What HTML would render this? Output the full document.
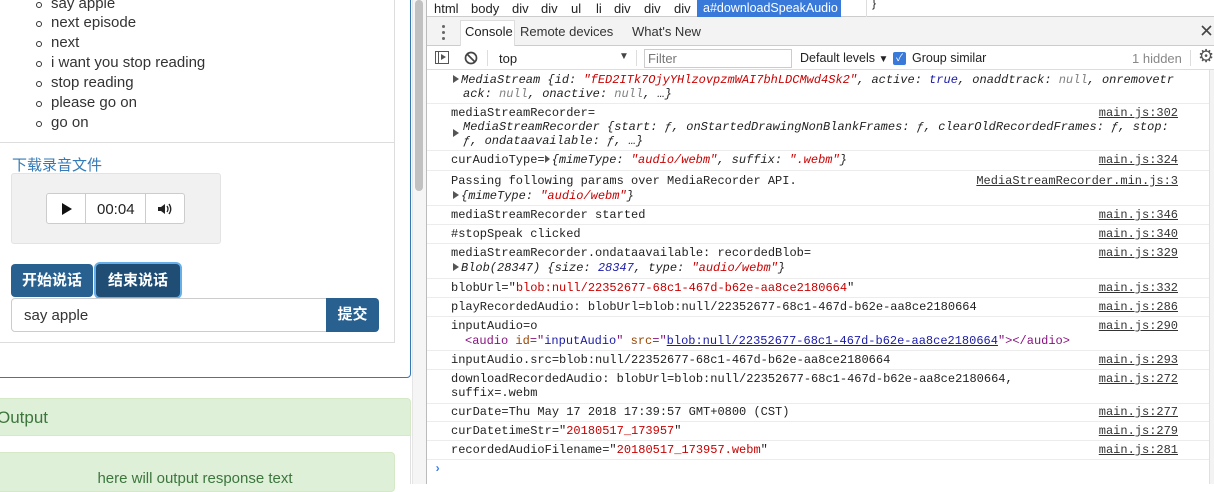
<!DOCTYPE html><html><head><meta charset="utf-8"><style>
*{margin:0;padding:0;box-sizing:border-box}
body{width:1214px;height:484px;overflow:hidden;position:relative;background:#fff;font-family:"Liberation Sans","Noto Sans CJK SC",sans-serif}
.a{position:absolute;white-space:nowrap}
.li{font-size:15px;color:#333;left:51px}
.bul{position:absolute;left:36px;width:6px;height:6px;border:1.3px solid #333;border-radius:50%}
.m{font-family:"Liberation Mono",monospace;font-size:12px;color:#222;position:absolute;white-space:nowrap;line-height:14px}
.r{color:#c80000}.b{color:#1a1aa6}.g{color:#808080}.i{font-style:italic}
.lk{position:absolute;right:36px;font-family:"Liberation Mono",monospace;font-size:12px;color:#333;text-decoration:underline;line-height:14px}
.sep{position:absolute;left:427px;right:5px;height:1px;background:#ececec}
.tri{display:inline-block;width:0;height:0;border-left:6px solid #555;border-top:4px solid transparent;border-bottom:4px solid transparent;margin-right:2px}
.btn{position:absolute;color:#fff;font-size:15px;font-weight:bold;text-align:center;line-height:33px;border-radius:4px}
.bc{position:absolute;top:1px;font-size:13px;color:#222}
</style></head><body>
<!-- left page -->
<div class="a li" style="top:-5px">say apple</div><div class="bul" style="top:2px"></div>
<div class="a li" style="top:14px">next episode</div><div class="bul" style="top:21px"></div>
<div class="a li" style="top:34px">next</div><div class="bul" style="top:41px"></div>
<div class="a li" style="top:54px">i want you stop reading</div><div class="bul" style="top:61px"></div>
<div class="a li" style="top:74px">stop reading</div><div class="bul" style="top:81px"></div>
<div class="a li" style="top:94px">please go on</div><div class="bul" style="top:101px"></div>
<div class="a li" style="top:114px">go on</div><div class="bul" style="top:121px"></div>
<div class="a" style="left:0;top:142px;width:395px;height:1px;background:#ddd"></div>
<div class="a" style="left:394px;top:0;width:1px;height:343px;background:#ddd"></div>
<div class="a" style="left:12px;top:154px;font-size:15px;color:#337ab7">下载录音文件</div>
<div class="a" style="left:11px;top:173px;width:210px;height:71px;background:#f1f1f1;border:1px solid #e3e3e3;border-radius:3px"></div>
<div class="a" style="left:46px;top:193px;width:139px;height:31px;background:#fff;border:1px solid #ccc;border-radius:3px"></div>
<div class="a" style="left:85px;top:193px;width:1px;height:31px;background:#ccc"></div>
<div class="a" style="left:145px;top:193px;width:1px;height:31px;background:#ccc"></div>
<div class="a" style="left:62px;top:203px;width:0;height:0;border-left:10px solid #111;border-top:6px solid transparent;border-bottom:6px solid transparent"></div>
<div class="a" style="left:97px;top:201px;font-size:15px;color:#222">00:04</div>
<svg class="a" style="left:157px;top:202px" width="16" height="14" viewBox="0 0 16 14"><path d="M1 5h3l4-3v10l-4-3H1z" fill="#222"/><path d="M10 4q2 3 0 6M12 2q3.5 5 0 10" stroke="#222" stroke-width="1.3" fill="none"/></svg>
<div class="btn" style="left:11px;top:264px;width:82px;background:#286090">开始说话</div>
<div class="btn" style="left:96px;top:264px;width:84px;background:#204d74;box-shadow:0 0 0 2px #66afe9">结束说话</div>
<div class="a" style="left:11px;top:298px;width:316px;height:34px;border:1px solid #ccc;border-radius:4px 0 0 4px;font-size:15px;color:#333;padding:8px 12px">say apple</div>
<div class="btn" style="left:326px;top:298px;width:53px;height:34px;background:#286090;border-radius:0 4px 4px 0">提交</div>
<div class="a" style="left:0;top:342px;width:395px;height:1px;background:#ddd"></div>
<div class="a" style="left:-5px;top:-5px;width:416px;height:383px;border:1px solid #337ab7;border-radius:4px"></div>
<div class="a" style="left:-4px;top:398px;width:415px;height:38px;background:#dff0d8;border:1px solid #d6e9c6;border-radius:4px 4px 0 0;font-size:17px;color:#3c763d;padding:9px 0 0 0;font-weight:500">Output</div>
<div class="a" style="left:410px;top:436px;width:1px;height:48px;background:#e0e0e0"></div>
<div class="a" style="left:-5px;top:452px;width:400px;height:40px;background:#dff0d8;border:1px solid #d6e9c6;border-radius:4px;font-size:15px;color:#3c763d;text-align:center;padding-top:17px">here will output response text</div>
<!-- scrollbar -->
<div class="a" style="left:412px;top:0;width:14px;height:484px;background:#f5f5f5;border-left:1px solid #e5e5e5"></div>
<div class="a" style="left:415px;top:0;width:8px;height:191px;background:#c1c1c1;border-radius:4px"></div>
<div class="a" style="left:426px;top:0;width:1px;height:484px;background:#bbb"></div>
<!-- devtools -->
<div class="a" style="left:427px;top:0;width:787px;height:17px;background:#fff;border-bottom:1px solid #ccc"></div>
<div class="bc" style="left:434px">html</div>
<div class="bc" style="left:471px">body</div>
<div class="bc" style="left:512px">div</div>
<div class="bc" style="left:541px">div</div>
<div class="bc" style="left:571px">ul</div>
<div class="bc" style="left:596px">li</div>
<div class="bc" style="left:614px">div</div>
<div class="bc" style="left:644px">div</div>
<div class="bc" style="left:674px">div</div>
<div class="a" style="left:697px;top:0;width:144px;height:17px;background:#3879d9;color:#fff;font-size:12.5px;padding:1px 0 0 6px;overflow:hidden">a#downloadSpeakAudio</div>
<div class="a" style="left:866px;top:0;width:1px;height:17px;background:#ddd"></div>
<div class="a" style="left:872px;top:-4px;font-size:12px;color:#222">}</div>
<div class="a" style="left:427px;top:17px;width:787px;height:29px;background:#f3f3f3;border-bottom:1px solid #ccc"></div>
<div class="a" style="left:442px;top:25px;width:3px;height:3px;background:#666;border-radius:50%;box-shadow:0 6px 0 #666,0 12px 0 #666"></div>
<div class="a" style="left:460px;top:20px;width:55px;height:27px;background:#fff;border:1px solid #ddd;border-bottom:none"></div>
<div class="a" style="left:465px;top:24px;font-size:13px;color:#222">Console</div>
<div class="a" style="left:520px;top:24px;font-size:13px;color:#333">Remote devices</div>
<div class="a" style="left:632px;top:24px;font-size:13px;color:#333">What's New</div>
<svg class="a" style="left:1201px;top:25px" width="11" height="11"><path d="M1 1l9 9M10 1l-9 9" stroke="#444" stroke-width="1.6"/></svg>
<div class="a" style="left:427px;top:46px;width:787px;height:24px;background:#fff;border-bottom:1px solid #ddd"></div>
<div class="a" style="left:435px;top:51px;width:14px;height:13px;border:1px solid #555"></div>
<div class="a" style="left:438px;top:51px;width:1px;height:13px;background:#555"></div>
<div class="a" style="left:441px;top:54px;border-left:5px solid #555;border-top:3.5px solid transparent;border-bottom:3.5px solid transparent"></div>
<svg class="a" style="left:464px;top:51px" width="14" height="14"><circle cx="7" cy="7" r="5.5" stroke="#444" stroke-width="1.7" fill="none"/><path d="M3 3l8 8" stroke="#444" stroke-width="1.7"/></svg>
<div class="a" style="left:487px;top:50px;width:1px;height:16px;background:#ddd"></div>
<div class="a" style="left:499px;top:51px;font-size:13px;color:#222">top</div>
<div class="a" style="left:619px;top:51px;font-size:10px;color:#444">▼</div>
<div class="a" style="left:636px;top:50px;width:1px;height:16px;background:#ddd"></div>
<div class="a" style="left:644px;top:49px;width:148px;height:19px;border:1px solid #ccc"></div>
<div class="a" style="left:648px;top:51px;font-size:13px;color:#777">Filter</div>
<div class="a" style="left:800px;top:51px;font-size:12.5px;color:#222">Default levels <span style="font-size:10px">▼</span></div>
<div class="a" style="left:893px;top:52px;width:13px;height:13px;background:#3879d9;border-radius:2px;color:#fff;font-size:10px;text-align:center;line-height:13px">✓</div>
<div class="a" style="left:912px;top:51px;font-size:12.5px;color:#222">Group similar</div>
<div class="a" style="left:1132px;top:51px;font-size:13px;color:#888">1 hidden</div>
<div class="a" style="left:1190px;top:50px;width:1px;height:16px;background:#ddd"></div>
<div class="a" style="left:1198px;top:46px;font-size:18px;color:#555">⚙</div>
<div class="a" style="left:1209px;top:70px;width:5px;height:414px;background:#f3f3f3;border-left:1px solid #e0e0e0"></div>
<!-- console -->
<div class="m" style="left:453px;top:73px"><span class="tri"></span><span class="i">MediaStream {id: <span class="r">"fED2ITk7OjyYHlzovpzmWAI7bhLDCMwd4Sk2"</span>, active: <span class="b">true</span>, onaddtrack: <span class="g">null</span>, onremovetr</span></div>
<div class="m i" style="left:463px;top:87px">ack: <span class="g">null</span>, onactive: <span class="g">null</span>, …}</div>
<div class="sep" style="top:103px"></div>
<div class="m" style="left:451px;top:106px">mediaStreamRecorder=</div><div class="lk" style="top:106px">main.js:302</div>
<div class="m i" style="left:463px;top:120px">MediaStreamRecorder {start: ƒ, onStartedDrawingNonBlankFrames: ƒ, clearOldRecordedFrames: ƒ, stop:</div>
<div class="m" style="left:453px;top:127px"><span class="tri"></span></div>
<div class="m i" style="left:463px;top:134px">ƒ, ondataavailable: ƒ, …}</div>
<div class="sep" style="top:150px"></div>
<div class="m" style="left:451px;top:153px">curAudioType=<span class="tri" style="margin:0 2px 0 0;border-left-width:5px"></span><span class="i">{mimeType: <span class="r">"audio/webm"</span>, suffix: <span class="r">".webm"</span>}</span></div><div class="lk" style="top:153px">main.js:324</div>
<div class="sep" style="top:170px"></div>
<div class="m" style="left:451px;top:174px">Passing following params over MediaRecorder API.</div><div class="lk" style="top:174px">MediaStreamRecorder.min.js:3</div>
<div class="m" style="left:453px;top:189px"><span class="tri"></span><span class="i">{mimeType: <span class="r">"audio/webm"</span>}</span></div>
<div class="sep" style="top:205px"></div>
<div class="m" style="left:451px;top:208px">mediaStreamRecorder started</div><div class="lk" style="top:208px">main.js:346</div>
<div class="sep" style="top:224px"></div>
<div class="m" style="left:451px;top:227px">#stopSpeak clicked</div><div class="lk" style="top:227px">main.js:340</div>
<div class="sep" style="top:243px"></div>
<div class="m" style="left:451px;top:246px">mediaStreamRecorder.ondataavailable: recordedBlob=</div><div class="lk" style="top:246px">main.js:329</div>
<div class="m" style="left:453px;top:261px"><span class="tri"></span><span class="i">Blob(28347) {size: <span class="b">28347</span>, type: <span class="r">"audio/webm"</span>}</span></div>
<div class="sep" style="top:278px"></div>
<div class="m" style="left:451px;top:281px">blobUrl="<span class="r">blob:null/22352677-68c1-467d-b62e-aa8ce2180664</span>"</div><div class="lk" style="top:281px">main.js:332</div>
<div class="sep" style="top:297px"></div>
<div class="m" style="left:451px;top:300px">playRecordedAudio: blobUrl=blob:null/22352677-68c1-467d-b62e-aa8ce2180664</div><div class="lk" style="top:300px">main.js:286</div>
<div class="sep" style="top:316px"></div>
<div class="m" style="left:451px;top:319px">inputAudio=o</div><div class="lk" style="top:319px">main.js:290</div>
<div class="m" style="left:465px;top:334px"><span style="color:#881280">&lt;audio</span> <span style="color:#994500">id</span><span style="color:#881280">="</span><span style="color:#1a1aa6">inputAudio</span><span style="color:#881280">"</span> <span style="color:#994500">src</span><span style="color:#881280">="</span><span style="color:#1a1aa6;text-decoration:underline">blob:null/22352677-68c1-467d-b62e-aa8ce2180664</span><span style="color:#881280">"&gt;&lt;/audio&gt;</span></div>
<div class="sep" style="top:350px"></div>
<div class="m" style="left:451px;top:353px">inputAudio.src=blob:null/22352677-68c1-467d-b62e-aa8ce2180664</div><div class="lk" style="top:353px">main.js:293</div>
<div class="sep" style="top:369px"></div>
<div class="m" style="left:451px;top:372px">downloadRecordedAudio: blobUrl=blob:null/22352677-68c1-467d-b62e-aa8ce2180664,</div><div class="lk" style="top:372px">main.js:272</div>
<div class="m" style="left:451px;top:386px">suffix=.webm</div>
<div class="sep" style="top:403px"></div>
<div class="m" style="left:451px;top:405px">curDate=Thu May 17 2018 17:39:57 GMT+0800 (CST)</div><div class="lk" style="top:405px">main.js:277</div>
<div class="sep" style="top:421px"></div>
<div class="m" style="left:451px;top:424px">curDatetimeStr="<span class="r">20180517_173957</span>"</div><div class="lk" style="top:424px">main.js:279</div>
<div class="sep" style="top:440px"></div>
<div class="m" style="left:451px;top:443px">recordedAudioFilename="<span class="r">20180517_173957.webm</span>"</div><div class="lk" style="top:443px">main.js:281</div>
<div class="sep" style="top:459px"></div>
<div class="m" style="left:434px;top:462px;color:#367cf1;font-weight:bold">›</div>
</body></html>
